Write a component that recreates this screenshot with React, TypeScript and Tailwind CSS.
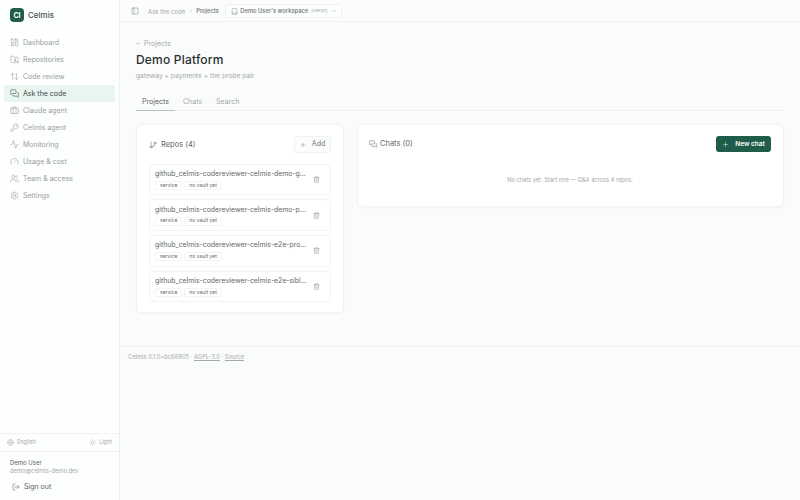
import {
  Activity,
  ArrowLeft,
  ArrowUpDown,
  Book,
  Briefcase,
  ChevronDown,
  ChevronRight,
  FolderGit2,
  Gauge,
  GitBranch,
  Globe,
  KeyRound,
  LayoutDashboard,
  LogOut,
  MessagesSquare,
  PanelLeft,
  Plus,
  Settings,
  Sun,
  Trash2,
  Users,
} from "lucide-react";

const NAV_ITEMS = [
  { label: "Dashboard", icon: LayoutDashboard },
  { label: "Repositories", icon: FolderGit2 },
  { label: "Code review", icon: ArrowUpDown },
  { label: "Ask the code", icon: MessagesSquare, active: true },
  { label: "Claude agent", icon: Briefcase },
  { label: "Celmis agent", icon: KeyRound },
  { label: "Monitoring", icon: Activity },
  { label: "Usage & cost", icon: Gauge },
  { label: "Team & access", icon: Users },
  { label: "Settings", icon: Settings },
];

const REPOS = [
  "github_celmis-codereviewer-celmis-demo-gateway",
  "github_celmis-codereviewer-celmis-demo-payments",
  "github_celmis-codereviewer-celmis-e2e-probe",
  "github_celmis-codereviewer-celmis-e2e-sibling",
];

function Sidebar() {
  return (
    <aside className="w-[120px] h-[500px] flex flex-col shrink-0 bg-[#fdfefe] border-r border-[#eef1f0]">
      <div className="flex items-center gap-[4px] pl-[10px] h-[30px] mb-[4px]">
        <div className="w-[14px] h-[14px] rounded-[4px] bg-[#1f5c4a] flex items-center justify-center">
          <span className="text-white text-[7px] font-bold leading-none">CI</span>
        </div>
        <span className="text-[8px] font-medium text-[#4a4f4e]">Celmis</span>
      </div>

      <nav className="flex flex-col px-[4px]">
        {NAV_ITEMS.map((item) => (
          <div
            key={item.label}
            className={
              item.active
                ? "h-[17px] flex items-center gap-[4px] pl-[6px] rounded-[3px] bg-[#e9f5f0] text-[#414846]"
                : "h-[17px] flex items-center gap-[4px] pl-[6px] text-[#999e9c]"
            }
          >
            <item.icon size={9} strokeWidth={1.5} />
            <span className="text-[7px] leading-none">{item.label}</span>
          </div>
        ))}
      </nav>

      <div className="mt-auto">
        <div className="h-[19px] flex items-center justify-between px-[7px] border-t border-b border-[#eef1f0] text-[#a6aaa8]">
          <div className="flex items-center gap-[3px]">
            <Globe size={7} strokeWidth={1.5} />
            <span className="text-[5.5px]">English</span>
          </div>
          <div className="flex items-center gap-[3px]">
            <Sun size={7} strokeWidth={1.5} />
            <span className="text-[5.5px]">Light</span>
          </div>
        </div>
        <div className="px-[10px] pt-[6px] pb-[8px]">
          <p className="text-[6px] leading-[9px] text-[#5a5e5d]">Demo User</p>
          <p className="text-[5.8px] leading-[8px] text-[#a6aaa8]">demo@celmis-demo.dev</p>
          <div className="flex items-center gap-[4px] mt-[7px] pl-[2px] text-[#5a5e5d]">
            <LogOut size={8} strokeWidth={1.5} />
            <span className="text-[7px]">Sign out</span>
          </div>
        </div>
      </div>
    </aside>
  );
}

function TopBar() {
  return (
    <header className="h-[22px] flex items-center pl-[11px] pt-[1px] border-b border-[#eef1f0] bg-[#fbfcfc]">
      <PanelLeft size={8} strokeWidth={1.5} className="text-[#7f8583]" />
      <span className="ml-[9px] text-[6px] text-[#a6aaa8]">Ask the code</span>
      <ChevronRight size={6} strokeWidth={1.5} className="mx-[2.5px] text-[#a6aaa8]" />
      <span className="text-[5.8px] font-medium text-[#6d7270]">Projects</span>
      <div className="ml-[6.5px] h-[14px] flex items-center gap-[2px] pl-[5px] pr-[4px] rounded-[3px] border border-[#f0f2f1] bg-[#fdfefe]">
        <Book size={7} strokeWidth={1.5} className="text-[#7f8583]" />
        <span className="text-[5.8px] font-medium text-[#6d7270]">Demo User's workspace</span>
        <span className="ml-[1px] text-[4.5px] text-[#a6aaa8]">(owner)</span>
        <ChevronDown size={6} strokeWidth={1.5} className="ml-[1px] text-[#7f8583]" />
      </div>
    </header>
  );
}

function RepoRow({ name }: { name: string }) {
  return (
    <div className="h-[31.7px] flex items-center rounded-[4px] border border-[#f2f4f3] bg-white pl-[5px] pr-[10px]">
      <div className="flex-1 min-w-0">
        <p className="truncate text-[6.9px] leading-[10px] text-[#636866]">{name}</p>
        <div className="flex gap-[2px] mt-[2px]">
          <span className="h-[9px] flex items-center px-[4px] rounded-[2px] border border-[#f2f4f3] text-[5px] text-[#636866]">service</span>
          <span className="h-[9px] flex items-center px-[4px] rounded-[2px] border border-[#f2f4f3] text-[5px] text-[#636866]">no vault yet</span>
        </div>
      </div>
      <Trash2 size={7} strokeWidth={1.5} className="ml-[6px] shrink-0 text-[#7f8583]" />
    </div>
  );
}

export default function App() {
  return (
    <div className="w-[800px] h-[500px] flex overflow-hidden bg-[#fafbfb] font-['Inter',sans-serif]">
      <Sidebar />
      <div className="flex-1 min-w-0 flex flex-col">
        <TopBar />
        <main className="h-[325px] border-b border-[#eef1f0] px-[16px] pt-[17px]">
          <div className="flex items-center gap-[3px] text-[#a6aaa8]">
            <ArrowLeft size={5} strokeWidth={1.5} />
            <span className="text-[7px] leading-[9px]">Projects</span>
          </div>
          <h1 className="mt-[4px] text-[12px] leading-[16px] font-medium tracking-[0.2px] text-[#2a2f2d]">Demo Platform</h1>
          <p className="mt-[3px] text-[6.7px] leading-[10px] text-[#a6aaa8]">gateway + payments + the probe pair</p>

          <div className="mt-[12px] flex border-b border-[#eef1f0] h-[18px] text-[7px]">
            <div className="w-[39px] text-center pt-[4px] -mb-px border-b border-[#b9c0bd] text-[#5a5e5d]">Projects</div>
            <div className="ml-[8px] pt-[4px] text-[#a6aaa8]">Chats</div>
            <div className="ml-[14px] pt-[4px] text-[#a6aaa8]">Search</div>
          </div>

          <div className="mt-[13px] flex gap-[13px] items-start">
            <section className="w-[208px] rounded-[5px] bg-white border border-[#f1f3f2] shadow-[0_1px_2px_rgba(0,0,0,0.03)] px-[12px] pt-[11px] pb-[10px]">
              <div className="flex items-center justify-between h-[17px]">
                <div className="flex items-center gap-[4px] text-[#636866]">
                  <GitBranch size={8} strokeWidth={1.5} />
                  <span className="text-[7.5px]">Repos (4)</span>
                </div>
                <div className="h-[17px] w-[37px] flex items-center justify-center gap-[6px] rounded-[3px] border border-[#f0f2f1] bg-[#fbfcfc] text-[#6d7270]">
                  <Plus size={6} strokeWidth={1.5} />
                  <span className="text-[7px]">Add</span>
                </div>
              </div>
              <div className="mt-[10.5px] flex flex-col gap-[4px]">
                {REPOS.map((r) => (
                  <RepoRow key={r} name={r} />
                ))}
              </div>
            </section>

            <section className="flex-1 h-[83px] rounded-[5px] bg-white border border-[#f1f3f2] shadow-[0_1px_2px_rgba(0,0,0,0.03)] pl-[11px] pr-[12px] pt-[11px]">
              <div className="flex items-center justify-between h-[16px]">
                <div className="flex items-center gap-[3px] text-[#636866]">
                  <MessagesSquare size={8} strokeWidth={1.5} />
                  <span className="text-[7.5px]">Chats (0)</span>
                </div>
                <div className="h-[16px] w-[55px] flex items-center justify-center gap-[6px] rounded-[3px] bg-[#1f5c4a] text-white">
                  <Plus size={7} strokeWidth={1.5} />
                  <span className="text-[6.5px] leading-[9px] pt-[1px] font-semibold">New chat</span>
                </div>
              </div>
              <p className="mt-[24px] text-center text-[5.7px] leading-[8px] text-[#a6aaa8]">No chats yet. Start one — Q&amp;A across 4 repos.</p>
            </section>
          </div>
        </main>
        <footer className="pl-[8px] pt-[5px] text-[5.8px] leading-[9px] text-[#a6aaa8]">
          Celmis 0.1.0+bc66905 · <span className="underline">AGPL-3.0</span> · <span className="underline">Source</span>
        </footer>
      </div>
    </div>
  );
}
